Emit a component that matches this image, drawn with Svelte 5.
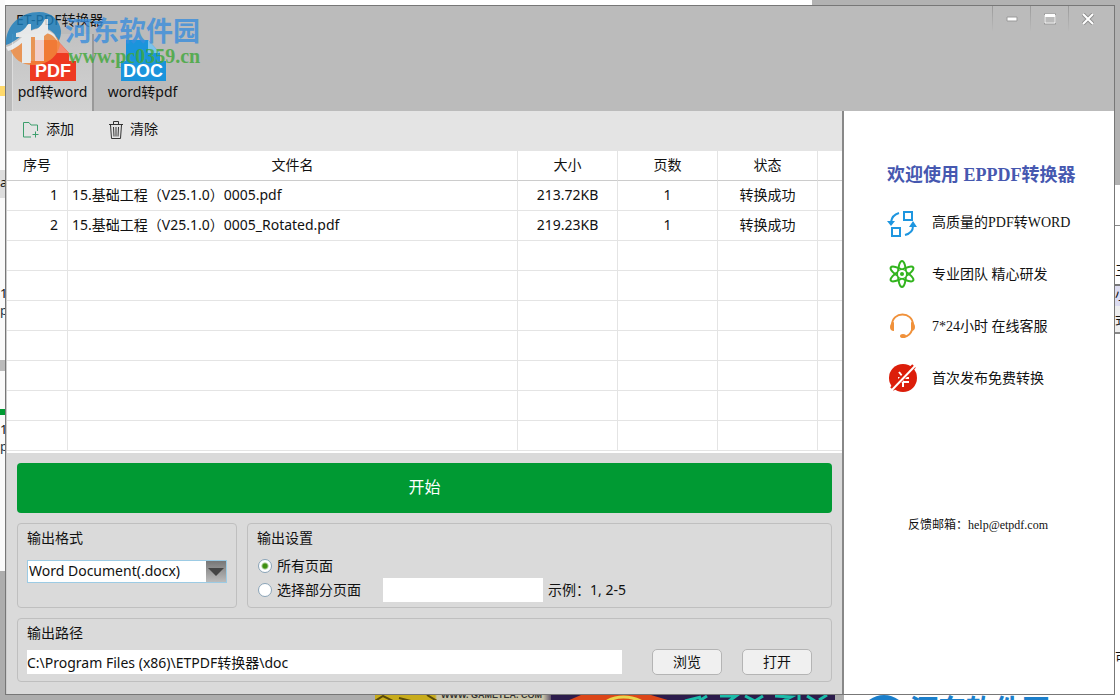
<script lang="ts">
  const ROW_COUNT = 9;

  const files = [
    { name: "15.基础工程（V25.1.0）0005.pdf", size: "213.72KB", pages: 1, status: "转换成功" },
    { name: "15.基础工程（V25.1.0）0005_Rotated.pdf", size: "219.23KB", pages: 1, status: "转换成功" },
  ];

  const features = [
    { icon: "convert", text: "高质量的PDF转WORD" },
    { icon: "atom", text: "专业团队 精心研发" },
    { icon: "headset", text: "7*24小时 在线客服" },
    { icon: "free", text: "首次发布免费转换" },
  ];

  let mode = $state("pdf2word");
  let range = $state("all");
  let pages = $state("");
  let format = $state("docx");
  let outputPath = $state("C:\\Program Files (x86)\\ETPDF转换器\\doc");

  const emptyRows = Array(ROW_COUNT - files.length).fill(0);
</script>

<div class="desktop">
  <div class="behind left">
    <span class="bit yellow"></span>
    <span class="bit grey"></span>
    <span class="letter a">a</span>
    <span class="letter one">1</span>
    <span class="letter p">p</span>
    <span class="bit bar"></span>
    <span class="bit green"></span>
    <span class="letter one2">1</span>
    <span class="letter p2">p</span>
    <span class="bit low"></span>
  </div>
  <div class="behind top"></div>
  <div class="behind right">
    <span class="bit shade"></span>
    <span class="bit rule"></span>
    <span class="letter r1">三</span>
    <span class="bit lilac"></span>
    <span class="letter r2">小</span>
    <span class="bit pale"></span>
    <span class="letter r3">式</span>
    <span class="letter r4">可</span>
  </div>
  <div class="behind bottom">
    <div class="banner">
      <svg class="art" width="460" height="6" viewBox="0 0 460 6" aria-hidden="true">
        <path d="M0 6L8 1l10 5M24 3l12 3M52 0l10 6" stroke="#5a4a08" stroke-width="2" fill="none" />
        <path d="M184 6l16-6h76l20 6z" fill="#dc4618" />
        <path d="M176 0h30l-14 6h-16z" fill="#2c1c4c" />
        <path d="M232 6q16-8 34 0" stroke="#e8d44c" stroke-width="3" fill="none" />
        <path d="M310 6l16-4M332 1l-8 5M345 1h16l-7 5M370 1l10 5M388 1l-8 5M400 1l16 1-8 4M424 0v6M432 1l8 5M452 0l-8 5" stroke="#1cbcaa" stroke-width="3" fill="none" />
      </svg>
      <span class="site">WWW. GAMETEA. COM</span>
    </div>
    <div class="repeat-mark">
      <span class="disc"></span>
      <span>河东软件园</span>
    </div>
  </div>

  <main class="window">
    <header>
      <div class="titlebar">
        <h1>ET-PDF转换器</h1>
        <div class="controls">
          <button aria-label="最小化">
            <svg width="12" height="12" viewBox="0 0 12 12"><path d="M1 4h10v4H1z" fill="#fff" stroke="#999" /></svg>
          </button>
          <button aria-label="最大化">
            <svg width="12" height="12" viewBox="0 0 12 12">
              <path d="M.5 1.5h11v9H.5z" fill="none" stroke="#999" stroke-width="2" />
              <path d="M1 2h10v8H1z" fill="none" stroke="#fff" />
              <path d="M1 1h10v3H1z" fill="#fff" />
            </svg>
          </button>
          <button aria-label="关闭">
            <svg width="12" height="12" viewBox="0 0 12 12">
              <path d="M1 1l10 10M11 1L1 11" stroke="#8f8f8f" stroke-width="4" />
              <path d="M1 1l10 10M11 1L1 11" stroke="#fff" stroke-width="2" />
            </svg>
          </button>
        </div>
      </div>
      <nav>
        <button class="tab" class:active={mode === "pdf2word"} onclick={() => (mode = "pdf2word")}>
          <svg width="46" height="48" viewBox="0 0 46 48" aria-hidden="true">
            <path d="M5 6h22l12 13v8H5z" fill="#ee3a22" />
            <path d="M27 6l12 13H27z" fill="#f58a74" />
            <path d="M0 27h46v20H0z" fill="#ee3a22" />
            <text x="23" y="43">PDF</text>
          </svg>
          pdf转word
        </button>
        <button class="tab" class:active={mode === "word2pdf"} onclick={() => (mode = "word2pdf")}>
          <svg width="46" height="48" viewBox="0 0 46 48" aria-hidden="true">
            <path d="M6 6h22l12 13v8H6z" fill="#1a94dc" />
            <path d="M28 6l12 13H28z" fill="#7cc4ec" />
            <path d="M1 27h45v20H1z" fill="#1a94dc" />
            <text x="23" y="43">DOC</text>
          </svg>
          word转pdf
        </button>
      </nav>
    </header>

    <div class="body">
      <section class="work">
        <div class="toolbar">
          <button>
            <svg width="18" height="18" viewBox="0 0 18 18" fill="none" stroke="#3c9e6c">
              <path d="M9 16H1.500V1.500H7L9 4h6.500v6M13.500 10.500v6M10.500 13.500h6" />
            </svg>
            添加
          </button>
          <button>
            <svg width="16" height="20" viewBox="0 0 16 20" fill="none" stroke="#333">
              <path d="M1 4.500h14M5.500 4V1.500h5V4M2.500 5l1 13.500h9l1-13.500M5.500 7l.5 9.500M8 7v9.500M10.500 7L10 16.500" />
            </svg>
            清除
          </button>
        </div>

        <div class="list">
          <table>
            <colgroup>
              <col class="no" />
              <col />
              <col class="cell" />
              <col class="cell" />
              <col class="cell" />
              <col class="rest" />
            </colgroup>
            <thead>
              <tr>
                <th>序号</th>
                <th>文件名</th>
                <th>大小</th>
                <th>页数</th>
                <th>状态</th>
                <th></th>
              </tr>
            </thead>
            <tbody>
              {#each files as file, i}
                <tr>
                  <td class="index">{i + 1}</td>
                  <td class="name">{file.name}</td>
                  <td>{file.size}</td>
                  <td>{file.pages}</td>
                  <td>{file.status}</td>
                  <td></td>
                </tr>
              {/each}
              {#each emptyRows as _}
                <tr><td></td><td></td><td></td><td></td><td></td><td></td></tr>
              {/each}
            </tbody>
          </table>
        </div>

        <div class="settings">
          <button class="start">开始</button>

          <div class="groups">
            <div class="group format">
              <label for="format">输出格式</label>
              <div class="select">
                <select id="format" bind:value={format}>
                  <option value="docx">Word Document(.docx)</option>
                  <option value="doc">Word Document(.doc)</option>
                </select>
                <span class="arrow"></span>
              </div>
            </div>

            <div class="group range" role="radiogroup" aria-labelledby="range-title">
              <span id="range-title">输出设置</span>
              <label class="radio">
                <input type="radio" value="all" bind:group={range} />
                所有页面
              </label>
              <div class="part">
                <label class="radio">
                  <input type="radio" value="part" bind:group={range} />
                  选择部分页面
                </label>
                <input id="pages" class="pages" type="text" bind:value={pages} />
                <label for="pages">示例：1, 2-5</label>
              </div>
            </div>
          </div>

          <div class="group output">
            <label for="path">输出路径</label>
            <div class="path-row">
              <input id="path" type="text" bind:value={outputPath} />
              <button>浏览</button>
              <button>打开</button>
            </div>
          </div>
        </div>
      </section>

      <aside>
        <h2>欢迎使用 EPPDF转换器</h2>
        <ul>
          {#each features as feature}
            <li>
              <svg width="30" height="30" viewBox="0 0 30 30" fill="none" aria-hidden="true">
                {#if feature.icon === "convert"}
                  <g stroke="#1e96e0" stroke-width="2">
                    <path d="M17 4h8v8h-8zM5 20h8v8H5z" />
                    <path d="M12 5Q5 7 4 14M18 27q8-2 8-9" />
                  </g>
                  <path d="M0 13h8l-4 5zM22 19h8l-4-6z" fill="#1e96e0" />
                {:else if feature.icon === "atom"}
                  <g stroke="#32b41e" stroke-width="2">
                    <ellipse cx="15" cy="14" rx="4" ry="13" />
                    <ellipse cx="15" cy="14" rx="4" ry="13" transform="rotate(60 15 14)" />
                    <ellipse cx="15" cy="14" rx="4" ry="13" transform="rotate(120 15 14)" />
                  </g>
                  <circle cx="15" cy="14" r="4" fill="#fff" />
                  <circle cx="15" cy="14" r="2" fill="#32b41e" />
                {:else if feature.icon === "headset"}
                  <path d="M5 13C5-1 26-1 26 13M25 18q-2 6-8 7" stroke="#f0913a" stroke-width="2" />
                  <path d="M7 10v9q-4 0-4-4t4-5zM24 10v9q4 0 4-4t-4-5z" fill="#f0913a" />
                  <ellipse cx="16" cy="24" rx="3" ry="2" fill="#f0913a" />
                {:else}
                  <circle cx="16" cy="14" r="14" fill="#dc1e0a" />
                  <path d="M12 8l4 5 5-5M11 14h11M11 18h11M16 13v10" stroke="#fff" stroke-width="2" />
                  <path d="M5 25L27 2" stroke="#dc1e0a" stroke-width="5" />
                  <path d="M4 27L28 2" stroke="#fff" stroke-width="2" />
                {/if}
              </svg>
              {feature.text}
            </li>
          {/each}
        </ul>
        <p>反馈邮箱：help@etpdf.com</p>
      </aside>
    </div>
  </main>

  <div class="watermark">
    <svg width="60" height="56" viewBox="0 0 60 56" aria-hidden="true">
      <path d="M1 34C0 14 16 1 34 1c12 0 21 8 22 19 0 5-1 8-3 11-2-9-8-14-17-14C22 17 12 31 1 34z" fill="#1b7fbe" />
      <path d="M5 37c11-3 18-16 33-16 10 0 16 6 17 12C53 46 42 54 28 54 17 54 8 48 5 37z" fill="#f28a3c" />
      <path d="M11 22c6-1 9-4 12-9h3v39h-9V26h-6z" fill="#f2f4f5" />
      <path d="M32 18c4-3 6-6 8-10h3v14l-4 3v25h-9V26h-5v-5z" fill="#f2f4f5" />
      <path d="M1 36C16 32 20 17 37 18c9 1 14 6 16 13-5-8-11-10-18-9C22 23 16 37 3 40z" fill="#f2f4f5" />
    </svg>
    <div class="mark-text">
      <span class="mark-name">河东软件园</span>
      <span class="mark-site">www.pc0359.cn</span>
    </div>
  </div>
</div>

<style>
  :global(body) {
    margin: 0;
    background: #fff;
  }

  .desktop {
    --ui: "Noto Sans", "Noto Sans CJK SC", sans-serif;
    --song: "Liberation Serif", "Noto Sans CJK SC", serif;
    position: relative;
    display: flex;
    box-sizing: border-box;
    min-height: 100vh;
    padding: 5px;
    overflow: hidden;
    font-family: var(--ui);
    font-size: 14px;
    line-height: 20px;
    color: #111;
  }

  button,
  input,
  select {
    font: inherit;
    color: inherit;
    margin: 0;
  }

  button {
    padding: 0;
    border: 0;
    background: none;
  }

  svg {
    flex: none;
  }

  /* slivers of other windows that show round the edges */
  .behind {
    position: absolute;
    overflow: hidden;
  }

  .left {
    left: 0;
    top: 0;
    bottom: 0;
    width: 5px;
    background: #fafafa;
  }

  .top {
    top: 0;
    left: 812px;
    right: 0;
    height: 5px;
    background: #b2b2b2;
  }

  .right {
    top: 0;
    right: 0;
    bottom: 0;
    width: 5px;
    background: #fff;
  }

  .bottom {
    left: 0;
    right: 0;
    bottom: 0;
    height: 5px;
    background: linear-gradient(to right, #adadad 844px, #fff 844px);
  }

  .bit,
  .letter {
    position: absolute;
    left: 0;
    width: 5px;
  }

  .letter {
    font-size: 13px;
    line-height: 14px;
  }

  .yellow { top: 86px; height: 10px; background: #ffd96b; }
  .grey { top: 170px; height: 28px; background: #ddd; }
  .a { top: 175px; }
  .one { top: 286px; }
  .p { top: 303px; color: #234; }
  .bar { top: 360px; height: 11px; background: #bbb; }
  .green { top: 409px; height: 6px; background: #009a33; }
  .one2 { top: 422px; }
  .p2 { top: 439px; color: #234; }
  .low { top: 571px; bottom: 0; background: #adadad; }
  .shade { top: 0; height: 185px; background: #b2b2b2; }
  .rule { top: 225px; height: 1px; background: #888; }
  .r1 { top: 263px; }
  .lilac { top: 284px; height: 20px; background: #dcdcf0; border-top: 2px solid #777; }
  .r2 { top: 287px; }
  .pale { top: 306px; height: 26px; background: #eee; border-bottom: 2px solid #888; }
  .r3 { top: 312px; }
  .r4 { top: 650px; }

  .banner {
    position: absolute;
    left: 375px;
    width: 460px;
    height: 5px;
    overflow: hidden;
    background: linear-gradient(to right, #c8ac1c 60px, #c9c4a8 62px, #c9c4a8 168px, #2c1c4c 180px);
  }

  .art {
    display: block;
  }

  .site {
    position: absolute;
    left: 66px;
    bottom: 0;
    font: bold 9px/9px "Liberation Sans", sans-serif;
    color: #333;
  }

  .repeat-mark {
    position: absolute;
    left: 864px;
    display: flex;
    gap: 6px;
    color: #1b7fcb;
    font-weight: bold;
    font-size: 28px;
    line-height: 28px;
  }

  .disc {
    width: 40px;
    height: 30px;
    border-radius: 50%;
    background: #1b7fcb;
  }

  .window {
    flex: 1;
    display: flex;
    flex-direction: column;
    z-index: 0;
    border: 1px solid #777;
    background: #dadada;
  }

  header {
    background: #bbb;
  }

  .titlebar {
    display: flex;
    justify-content: space-between;
    height: 28px;
  }

  h1 {
    margin: 0;
    padding: 4px 10px;
    font-size: 14px;
    line-height: 20px;
    font-weight: normal;
  }

  .controls {
    display: flex;
    padding-right: 8px;
  }

  .controls button {
    display: grid;
    place-items: center;
    width: 38px;
    height: 25px;
    border-left: 1px solid #999;
    border-image: linear-gradient(#999, #bbb) 1;
    border-width: 0 0 0 1px;
  }

  nav {
    display: flex;
    gap: 8px;
    padding-left: 6px;
  }

  .tab {
    box-sizing: border-box;
    display: flex;
    flex-direction: column;
    align-items: center;
    width: 82px;
    height: 77px;
    white-space: nowrap;
    border: 1px solid transparent;
    border-width: 0 2px 0 1px;
  }

  .tab.active {
    background: linear-gradient(#c2c2c2, #d2d2d2);
    border-left-color: #ddd;
    border-right-color: #999;
  }

  .tab text {
    fill: #fff;
    font: bold 18px "Liberation Sans", sans-serif;
    text-anchor: middle;
  }

  .body {
    flex: 1;
    display: flex;
  }

  .work {
    flex: 1;
    display: flex;
    flex-direction: column;
    min-width: 0;
    border-left: 1px solid #ccc;
    border-right: 2px solid #888;
  }

  .toolbar {
    display: flex;
    gap: 34px;
    height: 40px;
    padding-left: 15px;
    background: #e4e4e4;
  }

  .toolbar button {
    display: flex;
    align-items: center;
    gap: 6px;
    height: 36px;
  }

  .toolbar svg {
    margin-top: 2px;
  }

  .list {
    flex: 1;
    background: #fff;
  }

  table {
    width: 100%;
    table-layout: fixed;
    border-collapse: separate;
    border-spacing: 0;
  }

  .no { width: 61px; }
  .cell { width: 100px; }
  .rest { width: 24px; }

  th,
  td {
    box-sizing: border-box;
    height: 30px;
    padding: 0 0 2px;
    font-weight: normal;
    text-align: center;
    border-right: 1px solid #e4e4e4;
    border-bottom: 1px solid #e4e4e4;
  }

  th {
    border-bottom-color: #ccc;
  }

  th:last-child,
  td:last-child {
    border-right: 0;
  }

  .index {
    text-align: right;
    padding-right: 9px;
  }

  .name {
    text-align: left;
    padding-left: 4px;
    white-space: nowrap;
  }

  .settings {
    display: flex;
    flex-direction: column;
    gap: 10px;
    padding: 10px 10px 12px;
  }

  .start {
    height: 50px;
    padding-bottom: 2px;
    border-radius: 4px;
    background: #009a33;
    color: #fff;
    font-size: 16px;
  }

  .groups {
    display: flex;
    gap: 10px;
  }

  .group {
    box-sizing: border-box;
    padding: 4px 9px;
    border: 1px solid #bfbfbf;
    border-radius: 4px;
  }

  .format {
    width: 220px;
    min-height: 85px;
  }

  .range {
    flex: 1;
  }

  .select {
    position: relative;
    margin-top: 12px;
  }

  select {
    display: block;
    box-sizing: border-box;
    width: 100%;
    height: 23px;
    padding: 0 0 2px 1px;
    appearance: none;
    border: 1px solid #9ccbe4;
    border-radius: 0;
    background: #fff;
    line-height: 20px;
  }

  .arrow {
    position: absolute;
    top: 1px;
    right: 1px;
    bottom: 1px;
    width: 20px;
    display: grid;
    place-items: center;
    background: linear-gradient(#777, #bbb);
    pointer-events: none;
  }

  .arrow::after {
    content: "";
    border: 8px solid transparent;
    border-top-color: #444;
    border-bottom: 0;
  }

  .radio {
    display: flex;
    align-items: center;
    gap: 5px;
  }

  .range > .radio {
    margin: 8px 0 2px;
  }

  input[type="radio"] {
    appearance: none;
    box-sizing: border-box;
    width: 14px;
    height: 14px;
    margin-left: 1px;
    border: 1px solid #8aa4b8;
    border-radius: 50%;
    background: #fff;
  }

  input[type="radio"]:checked {
    background: radial-gradient(#3f9010 2px, #fff 4px);
  }

  .part {
    display: flex;
    align-items: center;
  }

  input[type="text"] {
    box-sizing: border-box;
    height: 24px;
    padding: 0;
    border: 0;
    background: #fff;
  }

  .pages {
    width: 160px;
    margin: 0 5px 0 22px;
  }

  .path-row {
    display: flex;
    align-items: center;
    padding: 6px 10px 2px 0;
  }

  #path {
    flex: 1;
    min-width: 0;
    margin-right: 10px;
  }

  .path-row button {
    width: 70px;
    height: 26px;
    margin-left: 20px;
    border: 1px solid #b4b4b4;
    border-radius: 5px;
    background: #f0f0f0;
  }

  aside {
    box-sizing: border-box;
    width: 270px;
    padding: 52px 0 0 43px;
    background: #fff;
    font-family: var(--song);
  }

  h2 {
    margin: 0;
    font-size: 18px;
    line-height: 24px;
    color: #4658b0;
    white-space: nowrap;
  }

  ul {
    display: flex;
    flex-direction: column;
    gap: 22px;
    margin: 0;
    padding: 21px 0 0;
    list-style: none;
  }

  li {
    display: flex;
    align-items: center;
    gap: 15px;
    height: 30px;
  }

  aside p {
    margin: 0;
    padding: 121px 0 0 21px;
    font-size: 12px;
  }

  .watermark {
    position: absolute;
    z-index: 1;
    left: 5px;
    top: 11px;
    display: flex;
    opacity: 0.8;
    pointer-events: none;
  }

  .mark-text {
    display: flex;
    flex-direction: column;
    padding-top: 2px;
  }

  .mark-name {
    font: bold 27px/33px "Noto Sans CJK SC", sans-serif;
    color: #3a8edc;
  }

  .mark-site {
    padding-left: 3px;
    font: bold 20px/20px "Liberation Serif", serif;
    color: #3fa83a;
  }
</style>
